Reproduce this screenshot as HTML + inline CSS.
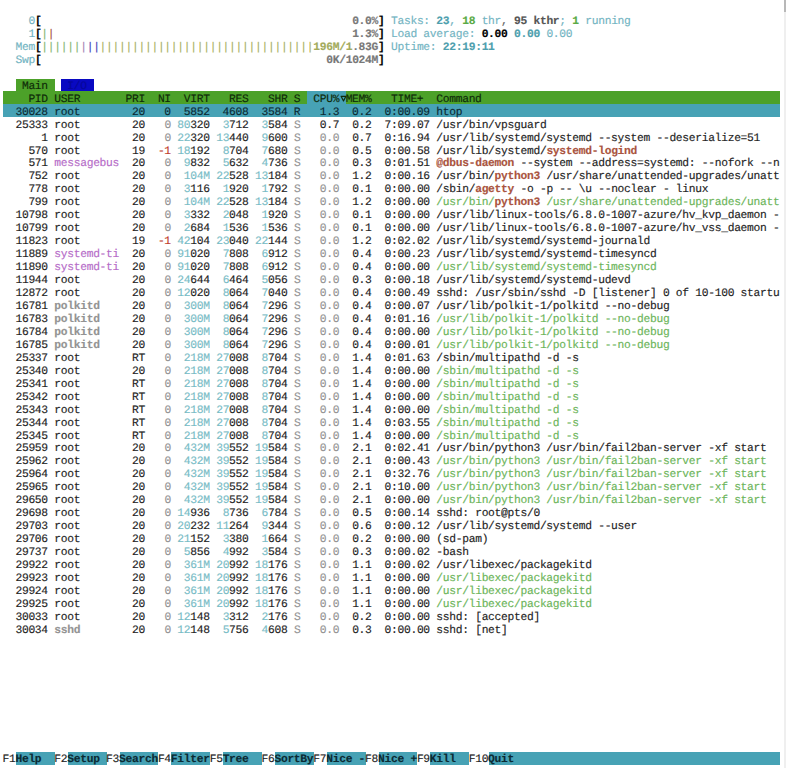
<!DOCTYPE html><html><head><meta charset="utf-8"><style>
html,body{margin:0;padding:0;background:#fff;width:786px;height:768px;overflow:hidden}
.b{position:absolute;height:12.956px}
.t{position:absolute;white-space:pre;font-family:"Liberation Mono",monospace;font-size:11.3000px;letter-spacing:-0.3050px;line-height:12.956px;height:12.956px;-webkit-text-stroke:0.15px currentColor;margin-top:2.3px;text-rendering:geometricPrecision}

</style></head><body>
<div class="b" style="left:15.95px;top:78.94px;width:38.85px;height:12.46px;background:#4ca129"></div>
<div class="b" style="left:61.27px;top:78.94px;width:32.38px;height:12.46px;background:#0909c2"></div>
<div class="b" style="left:3.00px;top:91.39px;width:777.00px;height:12.96px;background:#4ca129"></div>
<div class="b" style="left:307.32px;top:91.39px;width:38.85px;height:12.96px;background:#47a2b5"></div>
<div class="b" style="left:3.00px;top:104.35px;width:777.00px;height:12.96px;background:#47a2b5"></div>
<div class="b" style="left:15.95px;top:752.15px;width:38.85px;height:12.96px;background:#47a2b5"></div>
<div class="b" style="left:67.75px;top:752.15px;width:38.85px;height:12.96px;background:#47a2b5"></div>
<div class="b" style="left:119.55px;top:752.15px;width:38.85px;height:12.96px;background:#47a2b5"></div>
<div class="b" style="left:171.35px;top:752.15px;width:38.85px;height:12.96px;background:#47a2b5"></div>
<div class="b" style="left:223.15px;top:752.15px;width:38.85px;height:12.96px;background:#47a2b5"></div>
<div class="b" style="left:274.95px;top:752.15px;width:38.85px;height:12.96px;background:#47a2b5"></div>
<div class="b" style="left:326.75px;top:752.15px;width:38.85px;height:12.96px;background:#47a2b5"></div>
<div class="b" style="left:378.55px;top:752.15px;width:38.85px;height:12.96px;background:#47a2b5"></div>
<div class="b" style="left:430.35px;top:752.15px;width:38.85px;height:12.96px;background:#47a2b5"></div>
<div class="b" style="left:488.62px;top:752.15px;width:291.38px;height:12.96px;background:#47a2b5"></div>
<div class="t" style="left:28.40px;top:13.66px;color:#72b4c2">0</div>
<div class="t" style="left:34.88px;top:13.66px;color:#000;font-weight:bold">[</div>
<div class="t" style="left:352.15px;top:13.66px;color:#787878;font-weight:bold">0.0%</div>
<div class="t" style="left:378.05px;top:13.66px;color:#000;font-weight:bold">]</div>
<div class="t" style="left:391.00px;top:13.66px;color:#72b4c2">Tasks: </div>
<div class="t" style="left:436.32px;top:13.66px;color:#4e9fae;font-weight:bold">23</div>
<div class="t" style="left:449.27px;top:13.66px;color:#72b4c2">, </div>
<div class="t" style="left:462.22px;top:13.66px;color:#5aaa45;font-weight:bold">18</div>
<div class="t" style="left:475.17px;top:13.66px;color:#72b4c2"> thr</div>
<div class="t" style="left:501.07px;top:13.66px;color:#666">, </div>
<div class="t" style="left:514.02px;top:13.66px;color:#555;font-weight:bold">95 kthr</div>
<div class="t" style="left:559.35px;top:13.66px;color:#72b4c2">; </div>
<div class="t" style="left:572.30px;top:13.66px;color:#5aaa45;font-weight:bold">1</div>
<div class="t" style="left:578.77px;top:13.66px;color:#72b4c2"> running</div>
<div class="t" style="left:28.40px;top:26.61px;color:#72b4c2">1</div>
<div class="t" style="left:34.88px;top:26.61px;color:#000;font-weight:bold">[</div>
<div class="t" style="left:41.35px;top:26.61px;color:#86b574;-webkit-text-stroke:0.12px currentColor">|</div>
<div class="t" style="left:47.82px;top:26.61px;color:#a5503e;-webkit-text-stroke:0.12px currentColor">|</div>
<div class="t" style="left:352.15px;top:26.61px;color:#787878;font-weight:bold">1.3%</div>
<div class="t" style="left:378.05px;top:26.61px;color:#000;font-weight:bold">]</div>
<div class="t" style="left:391.00px;top:26.61px;color:#72b4c2">Load average: </div>
<div class="t" style="left:481.65px;top:26.61px;color:#000;font-weight:bold">0.00</div>
<div class="t" style="left:507.55px;top:26.61px;color:#72b4c2"> </div>
<div class="t" style="left:514.02px;top:26.61px;color:#4e9fae;font-weight:bold">0.00</div>
<div class="t" style="left:539.92px;top:26.61px;color:#72b4c2"> </div>
<div class="t" style="left:546.40px;top:26.61px;color:#72b4c2">0.00</div>
<div class="t" style="left:15.45px;top:39.57px;color:#72b4c2">Mem</div>
<div class="t" style="left:34.88px;top:39.57px;color:#000;font-weight:bold">[</div>
<div class="t" style="left:41.35px;top:39.57px;color:#86b574;-webkit-text-stroke:0.12px currentColor">||||||</div>
<div class="t" style="left:80.20px;top:39.57px;color:#a47fb4;-webkit-text-stroke:0.12px currentColor">|</div>
<div class="t" style="left:86.67px;top:39.57px;color:#4040b8;-webkit-text-stroke:0.12px currentColor">||</div>
<div class="t" style="left:99.62px;top:39.57px;color:#a8b062;-webkit-text-stroke:0.12px currentColor">|||||||||||||||||||||||||||||||||</div>
<div class="t" style="left:313.30px;top:39.57px;color:#a3ab5c;font-weight:bold">196M/1</div>
<div class="t" style="left:352.15px;top:39.57px;color:#787878;font-weight:bold">.83G</div>
<div class="t" style="left:378.05px;top:39.57px;color:#000;font-weight:bold">]</div>
<div class="t" style="left:391.00px;top:39.57px;color:#72b4c2">Uptime: </div>
<div class="t" style="left:442.80px;top:39.57px;color:#4e9fae;font-weight:bold">22:19:11</div>
<div class="t" style="left:15.45px;top:52.52px;color:#72b4c2">Swp</div>
<div class="t" style="left:34.88px;top:52.52px;color:#000;font-weight:bold">[</div>
<div class="t" style="left:326.25px;top:52.52px;color:#787878;font-weight:bold">0K/1024M</div>
<div class="t" style="left:378.05px;top:52.52px;color:#000;font-weight:bold">]</div>
<div class="t" style="left:21.92px;top:78.44px;color:#0e2a08">Main</div>
<div class="t" style="left:67.25px;top:78.44px;color:#07079a">I/O</div>
<div class="t" style="left:2.50px;top:91.39px;color:#0e2a08">    PID USER       PRI  NI  VIRT   RES   SHR S  CPU% MEM%   TIME+  Command</div>
<div class="t" style="left:2.50px;top:104.35px;color:#0b2a33">  30028 root        20   0  5852  4608  3584 R   1.3  0.2  0:00.09 htop</div>
<div class="t" style="left:15.45px;top:117.30px;color:#242424">25333</div>
<div class="t" style="left:54.30px;top:117.30px;color:#242424">root</div>
<div class="t" style="left:132.00px;top:117.30px;color:#242424">20</div>
<div class="t" style="left:164.38px;top:117.30px;color:#939393">0</div>
<div class="t" style="left:177.32px;top:117.30px;color:#78bcc6">80</div>
<div class="t" style="left:190.27px;top:117.30px;color:#242424">320</div>
<div class="t" style="left:222.65px;top:117.30px;color:#78bcc6">3</div>
<div class="t" style="left:229.12px;top:117.30px;color:#242424">712</div>
<div class="t" style="left:261.50px;top:117.30px;color:#78bcc6">3</div>
<div class="t" style="left:267.97px;top:117.30px;color:#242424">584</div>
<div class="t" style="left:293.88px;top:117.30px;color:#939393">S</div>
<div class="t" style="left:319.77px;top:117.30px;color:#242424">0.7</div>
<div class="t" style="left:352.15px;top:117.30px;color:#242424">0.2</div>
<div class="t" style="left:384.52px;top:117.30px;color:#242424">7:09.07</div>
<div class="t" style="left:436.32px;top:117.30px;color:#242424">/usr/bin/vpsguard</div>
<div class="t" style="left:41.35px;top:130.26px;color:#242424">1</div>
<div class="t" style="left:54.30px;top:130.26px;color:#242424">root</div>
<div class="t" style="left:132.00px;top:130.26px;color:#242424">20</div>
<div class="t" style="left:164.38px;top:130.26px;color:#939393">0</div>
<div class="t" style="left:177.32px;top:130.26px;color:#78bcc6">22</div>
<div class="t" style="left:190.27px;top:130.26px;color:#242424">320</div>
<div class="t" style="left:216.17px;top:130.26px;color:#78bcc6">13</div>
<div class="t" style="left:229.12px;top:130.26px;color:#242424">440</div>
<div class="t" style="left:261.50px;top:130.26px;color:#78bcc6">9</div>
<div class="t" style="left:267.97px;top:130.26px;color:#242424">600</div>
<div class="t" style="left:293.88px;top:130.26px;color:#939393">S</div>
<div class="t" style="left:319.77px;top:130.26px;color:#939393">0.0</div>
<div class="t" style="left:352.15px;top:130.26px;color:#242424">0.7</div>
<div class="t" style="left:384.52px;top:130.26px;color:#242424">0:16.94</div>
<div class="t" style="left:436.32px;top:130.26px;color:#242424">/usr/lib/systemd/systemd --system --deserialize=51</div>
<div class="t" style="left:28.40px;top:143.22px;color:#242424">570</div>
<div class="t" style="left:54.30px;top:143.22px;color:#242424">root</div>
<div class="t" style="left:132.00px;top:143.22px;color:#242424">19</div>
<div class="t" style="left:157.90px;top:143.22px;color:#c0392b">-1</div>
<div class="t" style="left:177.32px;top:143.22px;color:#78bcc6">18</div>
<div class="t" style="left:190.27px;top:143.22px;color:#242424">192</div>
<div class="t" style="left:222.65px;top:143.22px;color:#78bcc6">8</div>
<div class="t" style="left:229.12px;top:143.22px;color:#242424">704</div>
<div class="t" style="left:261.50px;top:143.22px;color:#78bcc6">7</div>
<div class="t" style="left:267.97px;top:143.22px;color:#242424">680</div>
<div class="t" style="left:293.88px;top:143.22px;color:#939393">S</div>
<div class="t" style="left:319.77px;top:143.22px;color:#939393">0.0</div>
<div class="t" style="left:352.15px;top:143.22px;color:#242424">0.5</div>
<div class="t" style="left:384.52px;top:143.22px;color:#242424">0:00.58</div>
<div class="t" style="left:436.32px;top:143.22px;color:#242424">/usr/lib/systemd/</div>
<div class="t" style="left:546.40px;top:143.22px;color:#aa5440;font-weight:bold">systemd-logind</div>
<div class="t" style="left:28.40px;top:156.17px;color:#242424">571</div>
<div class="t" style="left:54.30px;top:156.17px;color:#b66cc8">messagebus</div>
<div class="t" style="left:132.00px;top:156.17px;color:#242424">20</div>
<div class="t" style="left:164.38px;top:156.17px;color:#939393">0</div>
<div class="t" style="left:183.80px;top:156.17px;color:#78bcc6">9</div>
<div class="t" style="left:190.27px;top:156.17px;color:#242424">832</div>
<div class="t" style="left:222.65px;top:156.17px;color:#78bcc6">5</div>
<div class="t" style="left:229.12px;top:156.17px;color:#242424">632</div>
<div class="t" style="left:261.50px;top:156.17px;color:#78bcc6">4</div>
<div class="t" style="left:267.97px;top:156.17px;color:#242424">736</div>
<div class="t" style="left:293.88px;top:156.17px;color:#939393">S</div>
<div class="t" style="left:319.77px;top:156.17px;color:#939393">0.0</div>
<div class="t" style="left:352.15px;top:156.17px;color:#242424">0.3</div>
<div class="t" style="left:384.52px;top:156.17px;color:#242424">0:01.51</div>
<div class="t" style="left:436.32px;top:156.17px;color:#aa5440;font-weight:bold">@dbus-daemon</div>
<div class="t" style="left:514.02px;top:156.17px;color:#242424"> --system --address=systemd: --nofork --n</div>
<div class="t" style="left:28.40px;top:169.13px;color:#242424">752</div>
<div class="t" style="left:54.30px;top:169.13px;color:#242424">root</div>
<div class="t" style="left:132.00px;top:169.13px;color:#242424">20</div>
<div class="t" style="left:164.38px;top:169.13px;color:#939393">0</div>
<div class="t" style="left:183.80px;top:169.13px;color:#78bcc6">104M</div>
<div class="t" style="left:216.17px;top:169.13px;color:#78bcc6">22</div>
<div class="t" style="left:229.12px;top:169.13px;color:#242424">528</div>
<div class="t" style="left:255.02px;top:169.13px;color:#78bcc6">13</div>
<div class="t" style="left:267.97px;top:169.13px;color:#242424">184</div>
<div class="t" style="left:293.88px;top:169.13px;color:#939393">S</div>
<div class="t" style="left:319.77px;top:169.13px;color:#939393">0.0</div>
<div class="t" style="left:352.15px;top:169.13px;color:#242424">1.2</div>
<div class="t" style="left:384.52px;top:169.13px;color:#242424">0:00.16</div>
<div class="t" style="left:436.32px;top:169.13px;color:#242424">/usr/bin/</div>
<div class="t" style="left:494.60px;top:169.13px;color:#aa5440;font-weight:bold">python3</div>
<div class="t" style="left:539.92px;top:169.13px;color:#242424"> /usr/share/unattended-upgrades/unatt</div>
<div class="t" style="left:28.40px;top:182.08px;color:#242424">778</div>
<div class="t" style="left:54.30px;top:182.08px;color:#242424">root</div>
<div class="t" style="left:132.00px;top:182.08px;color:#242424">20</div>
<div class="t" style="left:164.38px;top:182.08px;color:#939393">0</div>
<div class="t" style="left:183.80px;top:182.08px;color:#78bcc6">3</div>
<div class="t" style="left:190.27px;top:182.08px;color:#242424">116</div>
<div class="t" style="left:222.65px;top:182.08px;color:#78bcc6">1</div>
<div class="t" style="left:229.12px;top:182.08px;color:#242424">920</div>
<div class="t" style="left:261.50px;top:182.08px;color:#78bcc6">1</div>
<div class="t" style="left:267.97px;top:182.08px;color:#242424">792</div>
<div class="t" style="left:293.88px;top:182.08px;color:#939393">S</div>
<div class="t" style="left:319.77px;top:182.08px;color:#939393">0.0</div>
<div class="t" style="left:352.15px;top:182.08px;color:#242424">0.1</div>
<div class="t" style="left:384.52px;top:182.08px;color:#242424">0:00.00</div>
<div class="t" style="left:436.32px;top:182.08px;color:#242424">/sbin/</div>
<div class="t" style="left:475.17px;top:182.08px;color:#aa5440;font-weight:bold">agetty</div>
<div class="t" style="left:514.02px;top:182.08px;color:#242424"> -o -p -- \u --noclear - linux</div>
<div class="t" style="left:28.40px;top:195.04px;color:#242424">799</div>
<div class="t" style="left:54.30px;top:195.04px;color:#242424">root</div>
<div class="t" style="left:132.00px;top:195.04px;color:#242424">20</div>
<div class="t" style="left:164.38px;top:195.04px;color:#939393">0</div>
<div class="t" style="left:183.80px;top:195.04px;color:#78bcc6">104M</div>
<div class="t" style="left:216.17px;top:195.04px;color:#78bcc6">22</div>
<div class="t" style="left:229.12px;top:195.04px;color:#242424">528</div>
<div class="t" style="left:255.02px;top:195.04px;color:#78bcc6">13</div>
<div class="t" style="left:267.97px;top:195.04px;color:#242424">184</div>
<div class="t" style="left:293.88px;top:195.04px;color:#939393">S</div>
<div class="t" style="left:319.77px;top:195.04px;color:#939393">0.0</div>
<div class="t" style="left:352.15px;top:195.04px;color:#242424">1.2</div>
<div class="t" style="left:384.52px;top:195.04px;color:#242424">0:00.00</div>
<div class="t" style="left:436.32px;top:195.04px;color:#6cb55a">/usr/bin/</div>
<div class="t" style="left:494.60px;top:195.04px;color:#aa5440;font-weight:bold">python3</div>
<div class="t" style="left:539.92px;top:195.04px;color:#6cb55a"> /usr/share/unattended-upgrades/unatt</div>
<div class="t" style="left:15.45px;top:208.00px;color:#242424">10798</div>
<div class="t" style="left:54.30px;top:208.00px;color:#242424">root</div>
<div class="t" style="left:132.00px;top:208.00px;color:#242424">20</div>
<div class="t" style="left:164.38px;top:208.00px;color:#939393">0</div>
<div class="t" style="left:183.80px;top:208.00px;color:#78bcc6">3</div>
<div class="t" style="left:190.27px;top:208.00px;color:#242424">332</div>
<div class="t" style="left:222.65px;top:208.00px;color:#78bcc6">2</div>
<div class="t" style="left:229.12px;top:208.00px;color:#242424">048</div>
<div class="t" style="left:261.50px;top:208.00px;color:#78bcc6">1</div>
<div class="t" style="left:267.97px;top:208.00px;color:#242424">920</div>
<div class="t" style="left:293.88px;top:208.00px;color:#939393">S</div>
<div class="t" style="left:319.77px;top:208.00px;color:#939393">0.0</div>
<div class="t" style="left:352.15px;top:208.00px;color:#242424">0.1</div>
<div class="t" style="left:384.52px;top:208.00px;color:#242424">0:00.00</div>
<div class="t" style="left:436.32px;top:208.00px;color:#242424">/usr/lib/linux-tools/6.8.0-1007-azure/hv_kvp_daemon -</div>
<div class="t" style="left:15.45px;top:220.95px;color:#242424">10799</div>
<div class="t" style="left:54.30px;top:220.95px;color:#242424">root</div>
<div class="t" style="left:132.00px;top:220.95px;color:#242424">20</div>
<div class="t" style="left:164.38px;top:220.95px;color:#939393">0</div>
<div class="t" style="left:183.80px;top:220.95px;color:#78bcc6">2</div>
<div class="t" style="left:190.27px;top:220.95px;color:#242424">684</div>
<div class="t" style="left:222.65px;top:220.95px;color:#78bcc6">1</div>
<div class="t" style="left:229.12px;top:220.95px;color:#242424">536</div>
<div class="t" style="left:261.50px;top:220.95px;color:#78bcc6">1</div>
<div class="t" style="left:267.97px;top:220.95px;color:#242424">536</div>
<div class="t" style="left:293.88px;top:220.95px;color:#939393">S</div>
<div class="t" style="left:319.77px;top:220.95px;color:#939393">0.0</div>
<div class="t" style="left:352.15px;top:220.95px;color:#242424">0.1</div>
<div class="t" style="left:384.52px;top:220.95px;color:#242424">0:00.00</div>
<div class="t" style="left:436.32px;top:220.95px;color:#242424">/usr/lib/linux-tools/6.8.0-1007-azure/hv_vss_daemon -</div>
<div class="t" style="left:15.45px;top:233.91px;color:#242424">11823</div>
<div class="t" style="left:54.30px;top:233.91px;color:#242424">root</div>
<div class="t" style="left:132.00px;top:233.91px;color:#242424">19</div>
<div class="t" style="left:157.90px;top:233.91px;color:#c0392b">-1</div>
<div class="t" style="left:177.32px;top:233.91px;color:#78bcc6">42</div>
<div class="t" style="left:190.27px;top:233.91px;color:#242424">104</div>
<div class="t" style="left:216.17px;top:233.91px;color:#78bcc6">23</div>
<div class="t" style="left:229.12px;top:233.91px;color:#242424">040</div>
<div class="t" style="left:255.02px;top:233.91px;color:#78bcc6">22</div>
<div class="t" style="left:267.97px;top:233.91px;color:#242424">144</div>
<div class="t" style="left:293.88px;top:233.91px;color:#939393">S</div>
<div class="t" style="left:319.77px;top:233.91px;color:#939393">0.0</div>
<div class="t" style="left:352.15px;top:233.91px;color:#242424">1.2</div>
<div class="t" style="left:384.52px;top:233.91px;color:#242424">0:02.02</div>
<div class="t" style="left:436.32px;top:233.91px;color:#242424">/usr/lib/systemd/systemd-journald</div>
<div class="t" style="left:15.45px;top:246.86px;color:#242424">11889</div>
<div class="t" style="left:54.30px;top:246.86px;color:#b66cc8">systemd-ti</div>
<div class="t" style="left:132.00px;top:246.86px;color:#242424">20</div>
<div class="t" style="left:164.38px;top:246.86px;color:#939393">0</div>
<div class="t" style="left:177.32px;top:246.86px;color:#78bcc6">91</div>
<div class="t" style="left:190.27px;top:246.86px;color:#242424">020</div>
<div class="t" style="left:222.65px;top:246.86px;color:#78bcc6">7</div>
<div class="t" style="left:229.12px;top:246.86px;color:#242424">808</div>
<div class="t" style="left:261.50px;top:246.86px;color:#78bcc6">6</div>
<div class="t" style="left:267.97px;top:246.86px;color:#242424">912</div>
<div class="t" style="left:293.88px;top:246.86px;color:#939393">S</div>
<div class="t" style="left:319.77px;top:246.86px;color:#939393">0.0</div>
<div class="t" style="left:352.15px;top:246.86px;color:#242424">0.4</div>
<div class="t" style="left:384.52px;top:246.86px;color:#242424">0:00.23</div>
<div class="t" style="left:436.32px;top:246.86px;color:#242424">/usr/lib/systemd/systemd-timesyncd</div>
<div class="t" style="left:15.45px;top:259.82px;color:#242424">11890</div>
<div class="t" style="left:54.30px;top:259.82px;color:#b66cc8">systemd-ti</div>
<div class="t" style="left:132.00px;top:259.82px;color:#242424">20</div>
<div class="t" style="left:164.38px;top:259.82px;color:#939393">0</div>
<div class="t" style="left:177.32px;top:259.82px;color:#78bcc6">91</div>
<div class="t" style="left:190.27px;top:259.82px;color:#242424">020</div>
<div class="t" style="left:222.65px;top:259.82px;color:#78bcc6">7</div>
<div class="t" style="left:229.12px;top:259.82px;color:#242424">808</div>
<div class="t" style="left:261.50px;top:259.82px;color:#78bcc6">6</div>
<div class="t" style="left:267.97px;top:259.82px;color:#242424">912</div>
<div class="t" style="left:293.88px;top:259.82px;color:#939393">S</div>
<div class="t" style="left:319.77px;top:259.82px;color:#939393">0.0</div>
<div class="t" style="left:352.15px;top:259.82px;color:#242424">0.4</div>
<div class="t" style="left:384.52px;top:259.82px;color:#242424">0:00.00</div>
<div class="t" style="left:436.32px;top:259.82px;color:#6cb55a">/usr/lib/systemd/systemd-timesyncd</div>
<div class="t" style="left:15.45px;top:272.78px;color:#242424">11944</div>
<div class="t" style="left:54.30px;top:272.78px;color:#242424">root</div>
<div class="t" style="left:132.00px;top:272.78px;color:#242424">20</div>
<div class="t" style="left:164.38px;top:272.78px;color:#939393">0</div>
<div class="t" style="left:177.32px;top:272.78px;color:#78bcc6">24</div>
<div class="t" style="left:190.27px;top:272.78px;color:#242424">644</div>
<div class="t" style="left:222.65px;top:272.78px;color:#78bcc6">6</div>
<div class="t" style="left:229.12px;top:272.78px;color:#242424">464</div>
<div class="t" style="left:261.50px;top:272.78px;color:#78bcc6">5</div>
<div class="t" style="left:267.97px;top:272.78px;color:#242424">056</div>
<div class="t" style="left:293.88px;top:272.78px;color:#939393">S</div>
<div class="t" style="left:319.77px;top:272.78px;color:#939393">0.0</div>
<div class="t" style="left:352.15px;top:272.78px;color:#242424">0.3</div>
<div class="t" style="left:384.52px;top:272.78px;color:#242424">0:00.18</div>
<div class="t" style="left:436.32px;top:272.78px;color:#242424">/usr/lib/systemd/systemd-udevd</div>
<div class="t" style="left:15.45px;top:285.73px;color:#242424">12872</div>
<div class="t" style="left:54.30px;top:285.73px;color:#242424">root</div>
<div class="t" style="left:132.00px;top:285.73px;color:#242424">20</div>
<div class="t" style="left:164.38px;top:285.73px;color:#939393">0</div>
<div class="t" style="left:177.32px;top:285.73px;color:#78bcc6">12</div>
<div class="t" style="left:190.27px;top:285.73px;color:#242424">020</div>
<div class="t" style="left:222.65px;top:285.73px;color:#78bcc6">8</div>
<div class="t" style="left:229.12px;top:285.73px;color:#242424">064</div>
<div class="t" style="left:261.50px;top:285.73px;color:#78bcc6">7</div>
<div class="t" style="left:267.97px;top:285.73px;color:#242424">040</div>
<div class="t" style="left:293.88px;top:285.73px;color:#939393">S</div>
<div class="t" style="left:319.77px;top:285.73px;color:#939393">0.0</div>
<div class="t" style="left:352.15px;top:285.73px;color:#242424">0.4</div>
<div class="t" style="left:384.52px;top:285.73px;color:#242424">0:00.49</div>
<div class="t" style="left:436.32px;top:285.73px;color:#242424">sshd: /usr/sbin/sshd -D [listener] 0 of 10-100 startu</div>
<div class="t" style="left:15.45px;top:298.69px;color:#242424">16781</div>
<div class="t" style="left:54.30px;top:298.69px;color:#939393;font-weight:bold">polkitd</div>
<div class="t" style="left:132.00px;top:298.69px;color:#242424">20</div>
<div class="t" style="left:164.38px;top:298.69px;color:#939393">0</div>
<div class="t" style="left:183.80px;top:298.69px;color:#78bcc6">300M</div>
<div class="t" style="left:222.65px;top:298.69px;color:#78bcc6">8</div>
<div class="t" style="left:229.12px;top:298.69px;color:#242424">064</div>
<div class="t" style="left:261.50px;top:298.69px;color:#78bcc6">7</div>
<div class="t" style="left:267.97px;top:298.69px;color:#242424">296</div>
<div class="t" style="left:293.88px;top:298.69px;color:#939393">S</div>
<div class="t" style="left:319.77px;top:298.69px;color:#939393">0.0</div>
<div class="t" style="left:352.15px;top:298.69px;color:#242424">0.4</div>
<div class="t" style="left:384.52px;top:298.69px;color:#242424">0:00.07</div>
<div class="t" style="left:436.32px;top:298.69px;color:#242424">/usr/lib/polkit-1/polkitd --no-debug</div>
<div class="t" style="left:15.45px;top:311.64px;color:#242424">16783</div>
<div class="t" style="left:54.30px;top:311.64px;color:#939393;font-weight:bold">polkitd</div>
<div class="t" style="left:132.00px;top:311.64px;color:#242424">20</div>
<div class="t" style="left:164.38px;top:311.64px;color:#939393">0</div>
<div class="t" style="left:183.80px;top:311.64px;color:#78bcc6">300M</div>
<div class="t" style="left:222.65px;top:311.64px;color:#78bcc6">8</div>
<div class="t" style="left:229.12px;top:311.64px;color:#242424">064</div>
<div class="t" style="left:261.50px;top:311.64px;color:#78bcc6">7</div>
<div class="t" style="left:267.97px;top:311.64px;color:#242424">296</div>
<div class="t" style="left:293.88px;top:311.64px;color:#939393">S</div>
<div class="t" style="left:319.77px;top:311.64px;color:#939393">0.0</div>
<div class="t" style="left:352.15px;top:311.64px;color:#242424">0.4</div>
<div class="t" style="left:384.52px;top:311.64px;color:#242424">0:01.16</div>
<div class="t" style="left:436.32px;top:311.64px;color:#6cb55a">/usr/lib/polkit-1/polkitd --no-debug</div>
<div class="t" style="left:15.45px;top:324.60px;color:#242424">16784</div>
<div class="t" style="left:54.30px;top:324.60px;color:#939393;font-weight:bold">polkitd</div>
<div class="t" style="left:132.00px;top:324.60px;color:#242424">20</div>
<div class="t" style="left:164.38px;top:324.60px;color:#939393">0</div>
<div class="t" style="left:183.80px;top:324.60px;color:#78bcc6">300M</div>
<div class="t" style="left:222.65px;top:324.60px;color:#78bcc6">8</div>
<div class="t" style="left:229.12px;top:324.60px;color:#242424">064</div>
<div class="t" style="left:261.50px;top:324.60px;color:#78bcc6">7</div>
<div class="t" style="left:267.97px;top:324.60px;color:#242424">296</div>
<div class="t" style="left:293.88px;top:324.60px;color:#939393">S</div>
<div class="t" style="left:319.77px;top:324.60px;color:#939393">0.0</div>
<div class="t" style="left:352.15px;top:324.60px;color:#242424">0.4</div>
<div class="t" style="left:384.52px;top:324.60px;color:#242424">0:00.00</div>
<div class="t" style="left:436.32px;top:324.60px;color:#6cb55a">/usr/lib/polkit-1/polkitd --no-debug</div>
<div class="t" style="left:15.45px;top:337.56px;color:#242424">16785</div>
<div class="t" style="left:54.30px;top:337.56px;color:#939393;font-weight:bold">polkitd</div>
<div class="t" style="left:132.00px;top:337.56px;color:#242424">20</div>
<div class="t" style="left:164.38px;top:337.56px;color:#939393">0</div>
<div class="t" style="left:183.80px;top:337.56px;color:#78bcc6">300M</div>
<div class="t" style="left:222.65px;top:337.56px;color:#78bcc6">8</div>
<div class="t" style="left:229.12px;top:337.56px;color:#242424">064</div>
<div class="t" style="left:261.50px;top:337.56px;color:#78bcc6">7</div>
<div class="t" style="left:267.97px;top:337.56px;color:#242424">296</div>
<div class="t" style="left:293.88px;top:337.56px;color:#939393">S</div>
<div class="t" style="left:319.77px;top:337.56px;color:#939393">0.0</div>
<div class="t" style="left:352.15px;top:337.56px;color:#242424">0.4</div>
<div class="t" style="left:384.52px;top:337.56px;color:#242424">0:00.01</div>
<div class="t" style="left:436.32px;top:337.56px;color:#6cb55a">/usr/lib/polkit-1/polkitd --no-debug</div>
<div class="t" style="left:15.45px;top:350.51px;color:#242424">25337</div>
<div class="t" style="left:54.30px;top:350.51px;color:#242424">root</div>
<div class="t" style="left:132.00px;top:350.51px;color:#242424">RT</div>
<div class="t" style="left:164.38px;top:350.51px;color:#939393">0</div>
<div class="t" style="left:183.80px;top:350.51px;color:#78bcc6">218M</div>
<div class="t" style="left:216.17px;top:350.51px;color:#78bcc6">27</div>
<div class="t" style="left:229.12px;top:350.51px;color:#242424">008</div>
<div class="t" style="left:261.50px;top:350.51px;color:#78bcc6">8</div>
<div class="t" style="left:267.97px;top:350.51px;color:#242424">704</div>
<div class="t" style="left:293.88px;top:350.51px;color:#939393">S</div>
<div class="t" style="left:319.77px;top:350.51px;color:#939393">0.0</div>
<div class="t" style="left:352.15px;top:350.51px;color:#242424">1.4</div>
<div class="t" style="left:384.52px;top:350.51px;color:#242424">0:01.63</div>
<div class="t" style="left:436.32px;top:350.51px;color:#242424">/sbin/multipathd -d -s</div>
<div class="t" style="left:15.45px;top:363.47px;color:#242424">25340</div>
<div class="t" style="left:54.30px;top:363.47px;color:#242424">root</div>
<div class="t" style="left:132.00px;top:363.47px;color:#242424">20</div>
<div class="t" style="left:164.38px;top:363.47px;color:#939393">0</div>
<div class="t" style="left:183.80px;top:363.47px;color:#78bcc6">218M</div>
<div class="t" style="left:216.17px;top:363.47px;color:#78bcc6">27</div>
<div class="t" style="left:229.12px;top:363.47px;color:#242424">008</div>
<div class="t" style="left:261.50px;top:363.47px;color:#78bcc6">8</div>
<div class="t" style="left:267.97px;top:363.47px;color:#242424">704</div>
<div class="t" style="left:293.88px;top:363.47px;color:#939393">S</div>
<div class="t" style="left:319.77px;top:363.47px;color:#939393">0.0</div>
<div class="t" style="left:352.15px;top:363.47px;color:#242424">1.4</div>
<div class="t" style="left:384.52px;top:363.47px;color:#242424">0:00.00</div>
<div class="t" style="left:436.32px;top:363.47px;color:#6cb55a">/sbin/multipathd -d -s</div>
<div class="t" style="left:15.45px;top:376.42px;color:#242424">25341</div>
<div class="t" style="left:54.30px;top:376.42px;color:#242424">root</div>
<div class="t" style="left:132.00px;top:376.42px;color:#242424">RT</div>
<div class="t" style="left:164.38px;top:376.42px;color:#939393">0</div>
<div class="t" style="left:183.80px;top:376.42px;color:#78bcc6">218M</div>
<div class="t" style="left:216.17px;top:376.42px;color:#78bcc6">27</div>
<div class="t" style="left:229.12px;top:376.42px;color:#242424">008</div>
<div class="t" style="left:261.50px;top:376.42px;color:#78bcc6">8</div>
<div class="t" style="left:267.97px;top:376.42px;color:#242424">704</div>
<div class="t" style="left:293.88px;top:376.42px;color:#939393">S</div>
<div class="t" style="left:319.77px;top:376.42px;color:#939393">0.0</div>
<div class="t" style="left:352.15px;top:376.42px;color:#242424">1.4</div>
<div class="t" style="left:384.52px;top:376.42px;color:#242424">0:00.00</div>
<div class="t" style="left:436.32px;top:376.42px;color:#6cb55a">/sbin/multipathd -d -s</div>
<div class="t" style="left:15.45px;top:389.38px;color:#242424">25342</div>
<div class="t" style="left:54.30px;top:389.38px;color:#242424">root</div>
<div class="t" style="left:132.00px;top:389.38px;color:#242424">RT</div>
<div class="t" style="left:164.38px;top:389.38px;color:#939393">0</div>
<div class="t" style="left:183.80px;top:389.38px;color:#78bcc6">218M</div>
<div class="t" style="left:216.17px;top:389.38px;color:#78bcc6">27</div>
<div class="t" style="left:229.12px;top:389.38px;color:#242424">008</div>
<div class="t" style="left:261.50px;top:389.38px;color:#78bcc6">8</div>
<div class="t" style="left:267.97px;top:389.38px;color:#242424">704</div>
<div class="t" style="left:293.88px;top:389.38px;color:#939393">S</div>
<div class="t" style="left:319.77px;top:389.38px;color:#939393">0.0</div>
<div class="t" style="left:352.15px;top:389.38px;color:#242424">1.4</div>
<div class="t" style="left:384.52px;top:389.38px;color:#242424">0:00.00</div>
<div class="t" style="left:436.32px;top:389.38px;color:#6cb55a">/sbin/multipathd -d -s</div>
<div class="t" style="left:15.45px;top:402.34px;color:#242424">25343</div>
<div class="t" style="left:54.30px;top:402.34px;color:#242424">root</div>
<div class="t" style="left:132.00px;top:402.34px;color:#242424">RT</div>
<div class="t" style="left:164.38px;top:402.34px;color:#939393">0</div>
<div class="t" style="left:183.80px;top:402.34px;color:#78bcc6">218M</div>
<div class="t" style="left:216.17px;top:402.34px;color:#78bcc6">27</div>
<div class="t" style="left:229.12px;top:402.34px;color:#242424">008</div>
<div class="t" style="left:261.50px;top:402.34px;color:#78bcc6">8</div>
<div class="t" style="left:267.97px;top:402.34px;color:#242424">704</div>
<div class="t" style="left:293.88px;top:402.34px;color:#939393">S</div>
<div class="t" style="left:319.77px;top:402.34px;color:#939393">0.0</div>
<div class="t" style="left:352.15px;top:402.34px;color:#242424">1.4</div>
<div class="t" style="left:384.52px;top:402.34px;color:#242424">0:00.00</div>
<div class="t" style="left:436.32px;top:402.34px;color:#6cb55a">/sbin/multipathd -d -s</div>
<div class="t" style="left:15.45px;top:415.29px;color:#242424">25344</div>
<div class="t" style="left:54.30px;top:415.29px;color:#242424">root</div>
<div class="t" style="left:132.00px;top:415.29px;color:#242424">RT</div>
<div class="t" style="left:164.38px;top:415.29px;color:#939393">0</div>
<div class="t" style="left:183.80px;top:415.29px;color:#78bcc6">218M</div>
<div class="t" style="left:216.17px;top:415.29px;color:#78bcc6">27</div>
<div class="t" style="left:229.12px;top:415.29px;color:#242424">008</div>
<div class="t" style="left:261.50px;top:415.29px;color:#78bcc6">8</div>
<div class="t" style="left:267.97px;top:415.29px;color:#242424">704</div>
<div class="t" style="left:293.88px;top:415.29px;color:#939393">S</div>
<div class="t" style="left:319.77px;top:415.29px;color:#939393">0.0</div>
<div class="t" style="left:352.15px;top:415.29px;color:#242424">1.4</div>
<div class="t" style="left:384.52px;top:415.29px;color:#242424">0:03.55</div>
<div class="t" style="left:436.32px;top:415.29px;color:#6cb55a">/sbin/multipathd -d -s</div>
<div class="t" style="left:15.45px;top:428.25px;color:#242424">25345</div>
<div class="t" style="left:54.30px;top:428.25px;color:#242424">root</div>
<div class="t" style="left:132.00px;top:428.25px;color:#242424">RT</div>
<div class="t" style="left:164.38px;top:428.25px;color:#939393">0</div>
<div class="t" style="left:183.80px;top:428.25px;color:#78bcc6">218M</div>
<div class="t" style="left:216.17px;top:428.25px;color:#78bcc6">27</div>
<div class="t" style="left:229.12px;top:428.25px;color:#242424">008</div>
<div class="t" style="left:261.50px;top:428.25px;color:#78bcc6">8</div>
<div class="t" style="left:267.97px;top:428.25px;color:#242424">704</div>
<div class="t" style="left:293.88px;top:428.25px;color:#939393">S</div>
<div class="t" style="left:319.77px;top:428.25px;color:#939393">0.0</div>
<div class="t" style="left:352.15px;top:428.25px;color:#242424">1.4</div>
<div class="t" style="left:384.52px;top:428.25px;color:#242424">0:00.00</div>
<div class="t" style="left:436.32px;top:428.25px;color:#6cb55a">/sbin/multipathd -d -s</div>
<div class="t" style="left:15.45px;top:441.20px;color:#242424">25959</div>
<div class="t" style="left:54.30px;top:441.20px;color:#242424">root</div>
<div class="t" style="left:132.00px;top:441.20px;color:#242424">20</div>
<div class="t" style="left:164.38px;top:441.20px;color:#939393">0</div>
<div class="t" style="left:183.80px;top:441.20px;color:#78bcc6">432M</div>
<div class="t" style="left:216.17px;top:441.20px;color:#78bcc6">39</div>
<div class="t" style="left:229.12px;top:441.20px;color:#242424">552</div>
<div class="t" style="left:255.02px;top:441.20px;color:#78bcc6">19</div>
<div class="t" style="left:267.97px;top:441.20px;color:#242424">584</div>
<div class="t" style="left:293.88px;top:441.20px;color:#939393">S</div>
<div class="t" style="left:319.77px;top:441.20px;color:#939393">0.0</div>
<div class="t" style="left:352.15px;top:441.20px;color:#242424">2.1</div>
<div class="t" style="left:384.52px;top:441.20px;color:#242424">0:02.41</div>
<div class="t" style="left:436.32px;top:441.20px;color:#242424">/usr/bin/python3 /usr/bin/fail2ban-server -xf start</div>
<div class="t" style="left:15.45px;top:454.16px;color:#242424">25962</div>
<div class="t" style="left:54.30px;top:454.16px;color:#242424">root</div>
<div class="t" style="left:132.00px;top:454.16px;color:#242424">20</div>
<div class="t" style="left:164.38px;top:454.16px;color:#939393">0</div>
<div class="t" style="left:183.80px;top:454.16px;color:#78bcc6">432M</div>
<div class="t" style="left:216.17px;top:454.16px;color:#78bcc6">39</div>
<div class="t" style="left:229.12px;top:454.16px;color:#242424">552</div>
<div class="t" style="left:255.02px;top:454.16px;color:#78bcc6">19</div>
<div class="t" style="left:267.97px;top:454.16px;color:#242424">584</div>
<div class="t" style="left:293.88px;top:454.16px;color:#939393">S</div>
<div class="t" style="left:319.77px;top:454.16px;color:#939393">0.0</div>
<div class="t" style="left:352.15px;top:454.16px;color:#242424">2.1</div>
<div class="t" style="left:384.52px;top:454.16px;color:#242424">0:00.43</div>
<div class="t" style="left:436.32px;top:454.16px;color:#6cb55a">/usr/bin/python3 /usr/bin/fail2ban-server -xf start</div>
<div class="t" style="left:15.45px;top:467.12px;color:#242424">25964</div>
<div class="t" style="left:54.30px;top:467.12px;color:#242424">root</div>
<div class="t" style="left:132.00px;top:467.12px;color:#242424">20</div>
<div class="t" style="left:164.38px;top:467.12px;color:#939393">0</div>
<div class="t" style="left:183.80px;top:467.12px;color:#78bcc6">432M</div>
<div class="t" style="left:216.17px;top:467.12px;color:#78bcc6">39</div>
<div class="t" style="left:229.12px;top:467.12px;color:#242424">552</div>
<div class="t" style="left:255.02px;top:467.12px;color:#78bcc6">19</div>
<div class="t" style="left:267.97px;top:467.12px;color:#242424">584</div>
<div class="t" style="left:293.88px;top:467.12px;color:#939393">S</div>
<div class="t" style="left:319.77px;top:467.12px;color:#939393">0.0</div>
<div class="t" style="left:352.15px;top:467.12px;color:#242424">2.1</div>
<div class="t" style="left:384.52px;top:467.12px;color:#242424">0:32.76</div>
<div class="t" style="left:436.32px;top:467.12px;color:#6cb55a">/usr/bin/python3 /usr/bin/fail2ban-server -xf start</div>
<div class="t" style="left:15.45px;top:480.07px;color:#242424">25965</div>
<div class="t" style="left:54.30px;top:480.07px;color:#242424">root</div>
<div class="t" style="left:132.00px;top:480.07px;color:#242424">20</div>
<div class="t" style="left:164.38px;top:480.07px;color:#939393">0</div>
<div class="t" style="left:183.80px;top:480.07px;color:#78bcc6">432M</div>
<div class="t" style="left:216.17px;top:480.07px;color:#78bcc6">39</div>
<div class="t" style="left:229.12px;top:480.07px;color:#242424">552</div>
<div class="t" style="left:255.02px;top:480.07px;color:#78bcc6">19</div>
<div class="t" style="left:267.97px;top:480.07px;color:#242424">584</div>
<div class="t" style="left:293.88px;top:480.07px;color:#939393">S</div>
<div class="t" style="left:319.77px;top:480.07px;color:#939393">0.0</div>
<div class="t" style="left:352.15px;top:480.07px;color:#242424">2.1</div>
<div class="t" style="left:384.52px;top:480.07px;color:#242424">0:10.00</div>
<div class="t" style="left:436.32px;top:480.07px;color:#6cb55a">/usr/bin/python3 /usr/bin/fail2ban-server -xf start</div>
<div class="t" style="left:15.45px;top:493.03px;color:#242424">29650</div>
<div class="t" style="left:54.30px;top:493.03px;color:#242424">root</div>
<div class="t" style="left:132.00px;top:493.03px;color:#242424">20</div>
<div class="t" style="left:164.38px;top:493.03px;color:#939393">0</div>
<div class="t" style="left:183.80px;top:493.03px;color:#78bcc6">432M</div>
<div class="t" style="left:216.17px;top:493.03px;color:#78bcc6">39</div>
<div class="t" style="left:229.12px;top:493.03px;color:#242424">552</div>
<div class="t" style="left:255.02px;top:493.03px;color:#78bcc6">19</div>
<div class="t" style="left:267.97px;top:493.03px;color:#242424">584</div>
<div class="t" style="left:293.88px;top:493.03px;color:#939393">S</div>
<div class="t" style="left:319.77px;top:493.03px;color:#939393">0.0</div>
<div class="t" style="left:352.15px;top:493.03px;color:#242424">2.1</div>
<div class="t" style="left:384.52px;top:493.03px;color:#242424">0:00.00</div>
<div class="t" style="left:436.32px;top:493.03px;color:#6cb55a">/usr/bin/python3 /usr/bin/fail2ban-server -xf start</div>
<div class="t" style="left:15.45px;top:505.98px;color:#242424">29698</div>
<div class="t" style="left:54.30px;top:505.98px;color:#242424">root</div>
<div class="t" style="left:132.00px;top:505.98px;color:#242424">20</div>
<div class="t" style="left:164.38px;top:505.98px;color:#939393">0</div>
<div class="t" style="left:177.32px;top:505.98px;color:#78bcc6">14</div>
<div class="t" style="left:190.27px;top:505.98px;color:#242424">936</div>
<div class="t" style="left:222.65px;top:505.98px;color:#78bcc6">8</div>
<div class="t" style="left:229.12px;top:505.98px;color:#242424">736</div>
<div class="t" style="left:261.50px;top:505.98px;color:#78bcc6">6</div>
<div class="t" style="left:267.97px;top:505.98px;color:#242424">784</div>
<div class="t" style="left:293.88px;top:505.98px;color:#939393">S</div>
<div class="t" style="left:319.77px;top:505.98px;color:#939393">0.0</div>
<div class="t" style="left:352.15px;top:505.98px;color:#242424">0.5</div>
<div class="t" style="left:384.52px;top:505.98px;color:#242424">0:00.14</div>
<div class="t" style="left:436.32px;top:505.98px;color:#242424">sshd: root@pts/0</div>
<div class="t" style="left:15.45px;top:518.94px;color:#242424">29703</div>
<div class="t" style="left:54.30px;top:518.94px;color:#242424">root</div>
<div class="t" style="left:132.00px;top:518.94px;color:#242424">20</div>
<div class="t" style="left:164.38px;top:518.94px;color:#939393">0</div>
<div class="t" style="left:177.32px;top:518.94px;color:#78bcc6">20</div>
<div class="t" style="left:190.27px;top:518.94px;color:#242424">232</div>
<div class="t" style="left:216.17px;top:518.94px;color:#78bcc6">11</div>
<div class="t" style="left:229.12px;top:518.94px;color:#242424">264</div>
<div class="t" style="left:261.50px;top:518.94px;color:#78bcc6">9</div>
<div class="t" style="left:267.97px;top:518.94px;color:#242424">344</div>
<div class="t" style="left:293.88px;top:518.94px;color:#939393">S</div>
<div class="t" style="left:319.77px;top:518.94px;color:#939393">0.0</div>
<div class="t" style="left:352.15px;top:518.94px;color:#242424">0.6</div>
<div class="t" style="left:384.52px;top:518.94px;color:#242424">0:00.12</div>
<div class="t" style="left:436.32px;top:518.94px;color:#242424">/usr/lib/systemd/systemd --user</div>
<div class="t" style="left:15.45px;top:531.90px;color:#242424">29706</div>
<div class="t" style="left:54.30px;top:531.90px;color:#242424">root</div>
<div class="t" style="left:132.00px;top:531.90px;color:#242424">20</div>
<div class="t" style="left:164.38px;top:531.90px;color:#939393">0</div>
<div class="t" style="left:177.32px;top:531.90px;color:#78bcc6">21</div>
<div class="t" style="left:190.27px;top:531.90px;color:#242424">152</div>
<div class="t" style="left:222.65px;top:531.90px;color:#78bcc6">3</div>
<div class="t" style="left:229.12px;top:531.90px;color:#242424">380</div>
<div class="t" style="left:261.50px;top:531.90px;color:#78bcc6">1</div>
<div class="t" style="left:267.97px;top:531.90px;color:#242424">664</div>
<div class="t" style="left:293.88px;top:531.90px;color:#939393">S</div>
<div class="t" style="left:319.77px;top:531.90px;color:#939393">0.0</div>
<div class="t" style="left:352.15px;top:531.90px;color:#242424">0.2</div>
<div class="t" style="left:384.52px;top:531.90px;color:#242424">0:00.00</div>
<div class="t" style="left:436.32px;top:531.90px;color:#242424">(sd-pam)</div>
<div class="t" style="left:15.45px;top:544.85px;color:#242424">29737</div>
<div class="t" style="left:54.30px;top:544.85px;color:#242424">root</div>
<div class="t" style="left:132.00px;top:544.85px;color:#242424">20</div>
<div class="t" style="left:164.38px;top:544.85px;color:#939393">0</div>
<div class="t" style="left:183.80px;top:544.85px;color:#78bcc6">5</div>
<div class="t" style="left:190.27px;top:544.85px;color:#242424">856</div>
<div class="t" style="left:222.65px;top:544.85px;color:#78bcc6">4</div>
<div class="t" style="left:229.12px;top:544.85px;color:#242424">992</div>
<div class="t" style="left:261.50px;top:544.85px;color:#78bcc6">3</div>
<div class="t" style="left:267.97px;top:544.85px;color:#242424">584</div>
<div class="t" style="left:293.88px;top:544.85px;color:#939393">S</div>
<div class="t" style="left:319.77px;top:544.85px;color:#939393">0.0</div>
<div class="t" style="left:352.15px;top:544.85px;color:#242424">0.3</div>
<div class="t" style="left:384.52px;top:544.85px;color:#242424">0:00.02</div>
<div class="t" style="left:436.32px;top:544.85px;color:#242424">-bash</div>
<div class="t" style="left:15.45px;top:557.81px;color:#242424">29922</div>
<div class="t" style="left:54.30px;top:557.81px;color:#242424">root</div>
<div class="t" style="left:132.00px;top:557.81px;color:#242424">20</div>
<div class="t" style="left:164.38px;top:557.81px;color:#939393">0</div>
<div class="t" style="left:183.80px;top:557.81px;color:#78bcc6">361M</div>
<div class="t" style="left:216.17px;top:557.81px;color:#78bcc6">20</div>
<div class="t" style="left:229.12px;top:557.81px;color:#242424">992</div>
<div class="t" style="left:255.02px;top:557.81px;color:#78bcc6">18</div>
<div class="t" style="left:267.97px;top:557.81px;color:#242424">176</div>
<div class="t" style="left:293.88px;top:557.81px;color:#939393">S</div>
<div class="t" style="left:319.77px;top:557.81px;color:#939393">0.0</div>
<div class="t" style="left:352.15px;top:557.81px;color:#242424">1.1</div>
<div class="t" style="left:384.52px;top:557.81px;color:#242424">0:00.02</div>
<div class="t" style="left:436.32px;top:557.81px;color:#242424">/usr/libexec/packagekitd</div>
<div class="t" style="left:15.45px;top:570.76px;color:#242424">29923</div>
<div class="t" style="left:54.30px;top:570.76px;color:#242424">root</div>
<div class="t" style="left:132.00px;top:570.76px;color:#242424">20</div>
<div class="t" style="left:164.38px;top:570.76px;color:#939393">0</div>
<div class="t" style="left:183.80px;top:570.76px;color:#78bcc6">361M</div>
<div class="t" style="left:216.17px;top:570.76px;color:#78bcc6">20</div>
<div class="t" style="left:229.12px;top:570.76px;color:#242424">992</div>
<div class="t" style="left:255.02px;top:570.76px;color:#78bcc6">18</div>
<div class="t" style="left:267.97px;top:570.76px;color:#242424">176</div>
<div class="t" style="left:293.88px;top:570.76px;color:#939393">S</div>
<div class="t" style="left:319.77px;top:570.76px;color:#939393">0.0</div>
<div class="t" style="left:352.15px;top:570.76px;color:#242424">1.1</div>
<div class="t" style="left:384.52px;top:570.76px;color:#242424">0:00.00</div>
<div class="t" style="left:436.32px;top:570.76px;color:#6cb55a">/usr/libexec/packagekitd</div>
<div class="t" style="left:15.45px;top:583.72px;color:#242424">29924</div>
<div class="t" style="left:54.30px;top:583.72px;color:#242424">root</div>
<div class="t" style="left:132.00px;top:583.72px;color:#242424">20</div>
<div class="t" style="left:164.38px;top:583.72px;color:#939393">0</div>
<div class="t" style="left:183.80px;top:583.72px;color:#78bcc6">361M</div>
<div class="t" style="left:216.17px;top:583.72px;color:#78bcc6">20</div>
<div class="t" style="left:229.12px;top:583.72px;color:#242424">992</div>
<div class="t" style="left:255.02px;top:583.72px;color:#78bcc6">18</div>
<div class="t" style="left:267.97px;top:583.72px;color:#242424">176</div>
<div class="t" style="left:293.88px;top:583.72px;color:#939393">S</div>
<div class="t" style="left:319.77px;top:583.72px;color:#939393">0.0</div>
<div class="t" style="left:352.15px;top:583.72px;color:#242424">1.1</div>
<div class="t" style="left:384.52px;top:583.72px;color:#242424">0:00.00</div>
<div class="t" style="left:436.32px;top:583.72px;color:#6cb55a">/usr/libexec/packagekitd</div>
<div class="t" style="left:15.45px;top:596.68px;color:#242424">29925</div>
<div class="t" style="left:54.30px;top:596.68px;color:#242424">root</div>
<div class="t" style="left:132.00px;top:596.68px;color:#242424">20</div>
<div class="t" style="left:164.38px;top:596.68px;color:#939393">0</div>
<div class="t" style="left:183.80px;top:596.68px;color:#78bcc6">361M</div>
<div class="t" style="left:216.17px;top:596.68px;color:#78bcc6">20</div>
<div class="t" style="left:229.12px;top:596.68px;color:#242424">992</div>
<div class="t" style="left:255.02px;top:596.68px;color:#78bcc6">18</div>
<div class="t" style="left:267.97px;top:596.68px;color:#242424">176</div>
<div class="t" style="left:293.88px;top:596.68px;color:#939393">S</div>
<div class="t" style="left:319.77px;top:596.68px;color:#939393">0.0</div>
<div class="t" style="left:352.15px;top:596.68px;color:#242424">1.1</div>
<div class="t" style="left:384.52px;top:596.68px;color:#242424">0:00.00</div>
<div class="t" style="left:436.32px;top:596.68px;color:#6cb55a">/usr/libexec/packagekitd</div>
<div class="t" style="left:15.45px;top:609.63px;color:#242424">30033</div>
<div class="t" style="left:54.30px;top:609.63px;color:#242424">root</div>
<div class="t" style="left:132.00px;top:609.63px;color:#242424">20</div>
<div class="t" style="left:164.38px;top:609.63px;color:#939393">0</div>
<div class="t" style="left:177.32px;top:609.63px;color:#78bcc6">12</div>
<div class="t" style="left:190.27px;top:609.63px;color:#242424">148</div>
<div class="t" style="left:222.65px;top:609.63px;color:#78bcc6">3</div>
<div class="t" style="left:229.12px;top:609.63px;color:#242424">312</div>
<div class="t" style="left:261.50px;top:609.63px;color:#78bcc6">2</div>
<div class="t" style="left:267.97px;top:609.63px;color:#242424">176</div>
<div class="t" style="left:293.88px;top:609.63px;color:#939393">S</div>
<div class="t" style="left:319.77px;top:609.63px;color:#939393">0.0</div>
<div class="t" style="left:352.15px;top:609.63px;color:#242424">0.2</div>
<div class="t" style="left:384.52px;top:609.63px;color:#242424">0:00.00</div>
<div class="t" style="left:436.32px;top:609.63px;color:#242424">sshd: [accepted]</div>
<div class="t" style="left:15.45px;top:622.59px;color:#242424">30034</div>
<div class="t" style="left:54.30px;top:622.59px;color:#939393;font-weight:bold">sshd</div>
<div class="t" style="left:132.00px;top:622.59px;color:#242424">20</div>
<div class="t" style="left:164.38px;top:622.59px;color:#939393">0</div>
<div class="t" style="left:177.32px;top:622.59px;color:#78bcc6">12</div>
<div class="t" style="left:190.27px;top:622.59px;color:#242424">148</div>
<div class="t" style="left:222.65px;top:622.59px;color:#78bcc6">5</div>
<div class="t" style="left:229.12px;top:622.59px;color:#242424">756</div>
<div class="t" style="left:261.50px;top:622.59px;color:#78bcc6">4</div>
<div class="t" style="left:267.97px;top:622.59px;color:#242424">608</div>
<div class="t" style="left:293.88px;top:622.59px;color:#939393">S</div>
<div class="t" style="left:319.77px;top:622.59px;color:#939393">0.0</div>
<div class="t" style="left:352.15px;top:622.59px;color:#242424">0.3</div>
<div class="t" style="left:384.52px;top:622.59px;color:#242424">0:00.00</div>
<div class="t" style="left:436.32px;top:622.59px;color:#242424">sshd: [net]</div>
<div class="t" style="left:2.50px;top:752.15px;color:#242424">F1</div>
<div class="t" style="left:15.45px;top:752.15px;color:#0b2a33;font-weight:bold">Help  </div>
<div class="t" style="left:54.30px;top:752.15px;color:#242424">F2</div>
<div class="t" style="left:67.25px;top:752.15px;color:#0b2a33;font-weight:bold">Setup </div>
<div class="t" style="left:106.10px;top:752.15px;color:#242424">F3</div>
<div class="t" style="left:119.05px;top:752.15px;color:#0b2a33;font-weight:bold">Search</div>
<div class="t" style="left:157.90px;top:752.15px;color:#242424">F4</div>
<div class="t" style="left:170.85px;top:752.15px;color:#0b2a33;font-weight:bold">Filter</div>
<div class="t" style="left:209.70px;top:752.15px;color:#242424">F5</div>
<div class="t" style="left:222.65px;top:752.15px;color:#0b2a33;font-weight:bold">Tree  </div>
<div class="t" style="left:261.50px;top:752.15px;color:#242424">F6</div>
<div class="t" style="left:274.45px;top:752.15px;color:#0b2a33;font-weight:bold">SortBy</div>
<div class="t" style="left:313.30px;top:752.15px;color:#242424">F7</div>
<div class="t" style="left:326.25px;top:752.15px;color:#0b2a33;font-weight:bold">Nice -</div>
<div class="t" style="left:365.10px;top:752.15px;color:#242424">F8</div>
<div class="t" style="left:378.05px;top:752.15px;color:#0b2a33;font-weight:bold">Nice +</div>
<div class="t" style="left:416.90px;top:752.15px;color:#242424">F9</div>
<div class="t" style="left:429.85px;top:752.15px;color:#0b2a33;font-weight:bold">Kill  </div>
<div class="t" style="left:468.70px;top:752.15px;color:#242424">F10</div>
<div class="t" style="left:488.12px;top:752.15px;color:#0b2a33;font-weight:bold">Quit</div>
<svg style="position:absolute;left:340px;top:95px" width="7" height="7" viewBox="0 0 7 7"><path d="M1.1 1.3 L5.9 1.3 L3.5 5.9 Z" fill="none" stroke="#0e2a08" stroke-width="1.15" stroke-linejoin="round"/></svg>
<div style="position:absolute;left:784px;top:0;width:2px;height:768px;background:#efefef"></div>
<div style="position:absolute;left:784px;top:0;width:2px;height:12px;background:#b8b8b8"></div>
</body></html>
